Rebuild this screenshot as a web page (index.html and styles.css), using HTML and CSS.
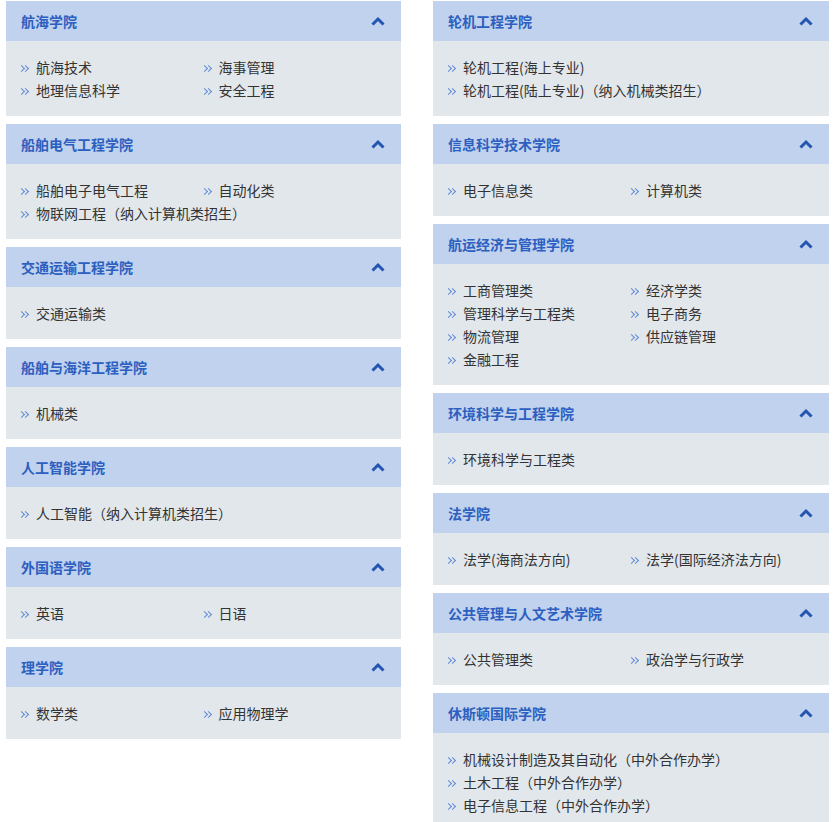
FILE: index.html
```html
<!DOCTYPE html>
<html lang="zh-CN">

<head>
  <meta charset="UTF-8">
  <meta name="viewport" content="width=device-width, initial-scale=1.0">
  <title>学院专业</title>
  <link rel="stylesheet" href="styles.css">
</head>

<body>
  <div class="colleges">
    <div class="column">
      <div class="college">
        <div class="college-header">
          <h3>航海学院</h3>
          <svg class="toggle" viewBox="0 0 14 10"><path d="M1.5 8.5 L7 3 L12.5 8.5" /></svg>
        </div>
        <ul class="majors">
          <li><i class="mark"></i>航海技术</li>
          <li><i class="mark"></i>海事管理</li>
          <li><i class="mark"></i>地理信息科学</li>
          <li><i class="mark"></i>安全工程</li>
        </ul>
      </div>
      <div class="college">
        <div class="college-header">
          <h3>船舶电气工程学院</h3>
          <svg class="toggle" viewBox="0 0 14 10"><path d="M1.5 8.5 L7 3 L12.5 8.5" /></svg>
        </div>
        <ul class="majors">
          <li><i class="mark"></i>船舶电子电气工程</li>
          <li><i class="mark"></i>自动化类</li>
          <li class="wide"><i class="mark"></i>物联网工程（纳入计算机类招生）</li>
        </ul>
      </div>
      <div class="college">
        <div class="college-header">
          <h3>交通运输工程学院</h3>
          <svg class="toggle" viewBox="0 0 14 10"><path d="M1.5 8.5 L7 3 L12.5 8.5" /></svg>
        </div>
        <ul class="majors">
          <li><i class="mark"></i>交通运输类</li>
        </ul>
      </div>
      <div class="college">
        <div class="college-header">
          <h3>船舶与海洋工程学院</h3>
          <svg class="toggle" viewBox="0 0 14 10"><path d="M1.5 8.5 L7 3 L12.5 8.5" /></svg>
        </div>
        <ul class="majors">
          <li><i class="mark"></i>机械类</li>
        </ul>
      </div>
      <div class="college">
        <div class="college-header">
          <h3>人工智能学院</h3>
          <svg class="toggle" viewBox="0 0 14 10"><path d="M1.5 8.5 L7 3 L12.5 8.5" /></svg>
        </div>
        <ul class="majors">
          <li class="wide"><i class="mark"></i>人工智能（纳入计算机类招生）</li>
        </ul>
      </div>
      <div class="college">
        <div class="college-header">
          <h3>外国语学院</h3>
          <svg class="toggle" viewBox="0 0 14 10"><path d="M1.5 8.5 L7 3 L12.5 8.5" /></svg>
        </div>
        <ul class="majors">
          <li><i class="mark"></i>英语</li>
          <li><i class="mark"></i>日语</li>
        </ul>
      </div>
      <div class="college">
        <div class="college-header">
          <h3>理学院</h3>
          <svg class="toggle" viewBox="0 0 14 10"><path d="M1.5 8.5 L7 3 L12.5 8.5" /></svg>
        </div>
        <ul class="majors">
          <li><i class="mark"></i>数学类</li>
          <li><i class="mark"></i>应用物理学</li>
        </ul>
      </div>
    </div>

    <div class="column">
      <div class="college">
        <div class="college-header">
          <h3>轮机工程学院</h3>
          <svg class="toggle" viewBox="0 0 14 10"><path d="M1.5 8.5 L7 3 L12.5 8.5" /></svg>
        </div>
        <ul class="majors">
          <li class="wide"><i class="mark"></i>轮机工程(海上专业)</li>
          <li class="wide"><i class="mark"></i>轮机工程(陆上专业)（纳入机械类招生）</li>
        </ul>
      </div>
      <div class="college">
        <div class="college-header">
          <h3>信息科学技术学院</h3>
          <svg class="toggle" viewBox="0 0 14 10"><path d="M1.5 8.5 L7 3 L12.5 8.5" /></svg>
        </div>
        <ul class="majors">
          <li><i class="mark"></i>电子信息类</li>
          <li><i class="mark"></i>计算机类</li>
        </ul>
      </div>
      <div class="college">
        <div class="college-header">
          <h3>航运经济与管理学院</h3>
          <svg class="toggle" viewBox="0 0 14 10"><path d="M1.5 8.5 L7 3 L12.5 8.5" /></svg>
        </div>
        <ul class="majors">
          <li><i class="mark"></i>工商管理类</li>
          <li><i class="mark"></i>经济学类</li>
          <li><i class="mark"></i>管理科学与工程类</li>
          <li><i class="mark"></i>电子商务</li>
          <li><i class="mark"></i>物流管理</li>
          <li><i class="mark"></i>供应链管理</li>
          <li><i class="mark"></i>金融工程</li>
        </ul>
      </div>
      <div class="college">
        <div class="college-header">
          <h3>环境科学与工程学院</h3>
          <svg class="toggle" viewBox="0 0 14 10"><path d="M1.5 8.5 L7 3 L12.5 8.5" /></svg>
        </div>
        <ul class="majors">
          <li><i class="mark"></i>环境科学与工程类</li>
        </ul>
      </div>
      <div class="college">
        <div class="college-header">
          <h3>法学院</h3>
          <svg class="toggle" viewBox="0 0 14 10"><path d="M1.5 8.5 L7 3 L12.5 8.5" /></svg>
        </div>
        <ul class="majors">
          <li><i class="mark"></i>法学(海商法方向)</li>
          <li><i class="mark"></i>法学(国际经济法方向)</li>
        </ul>
      </div>
      <div class="college">
        <div class="college-header">
          <h3>公共管理与人文艺术学院</h3>
          <svg class="toggle" viewBox="0 0 14 10"><path d="M1.5 8.5 L7 3 L12.5 8.5" /></svg>
        </div>
        <ul class="majors">
          <li><i class="mark"></i>公共管理类</li>
          <li><i class="mark"></i>政治学与行政学</li>
        </ul>
      </div>
      <div class="college">
        <div class="college-header">
          <h3>休斯顿国际学院</h3>
          <svg class="toggle" viewBox="0 0 14 10"><path d="M1.5 8.5 L7 3 L12.5 8.5" /></svg>
        </div>
        <ul class="majors">
          <li class="wide"><i class="mark"></i>机械设计制造及其自动化（中外合作办学）</li>
          <li class="wide"><i class="mark"></i>土木工程（中外合作办学）</li>
          <li class="wide"><i class="mark"></i>电子信息工程（中外合作办学）</li>
        </ul>
      </div>
    </div>
  </div>
</body>

</html>
```

FILE: styles.css
```css
* {
  box-sizing: border-box;
  margin: 0;
  padding: 0;
}

body {
  font-family: "Microsoft YaHei", "Noto Sans CJK SC", sans-serif;
  font-size: 14px;
  color: #333;
  background: #fff;
}

.colleges {
  display: grid;
  grid-template-columns: 395px 396px;
  column-gap: 32px;
  align-items: start;
  padding: 1px 6px 0;
}

.column {
  display: flex;
  flex-direction: column;
  gap: 8px;
}

.college {
  background: #e2e7ec;
}

.college-header {
  height: 40px;
  display: flex;
  align-items: center;
  justify-content: space-between;
  padding: 0 16px 0 15px;
  background: #c0d2ee;
}

.college-header h3 {
  font-size: 14px;
  font-weight: bold;
  color: #2c5fbf;
}

.toggle {
  width: 14px;
  height: 10px;
  fill: none;
  stroke: #2455b0;
  stroke-width: 3;
}

.majors {
  list-style: none;
  display: flex;
  flex-wrap: wrap;
  padding: 15px 15px 14px;
}

.majors li {
  width: 50%;
  height: 23px;
  line-height: 23px;
  white-space: nowrap;
  display: flex;
  align-items: center;
}

.majors li.wide {
  width: 100%;
}

/* small double chevron before each major */
.mark {
  position: relative;
  display: inline-block;
  width: 9px;
  height: 7px;
  margin: 1px 6px 0 0;
}

.mark::before,
.mark::after {
  content: "";
  position: absolute;
  top: 1px;
  width: 4px;
  height: 4px;
  border-top: 1px solid #5f8ad6;
  border-right: 1px solid #5f8ad6;
  transform: rotate(45deg);
}

.mark::before {
  left: -2px;
}

.mark::after {
  left: 2px;
}
```
